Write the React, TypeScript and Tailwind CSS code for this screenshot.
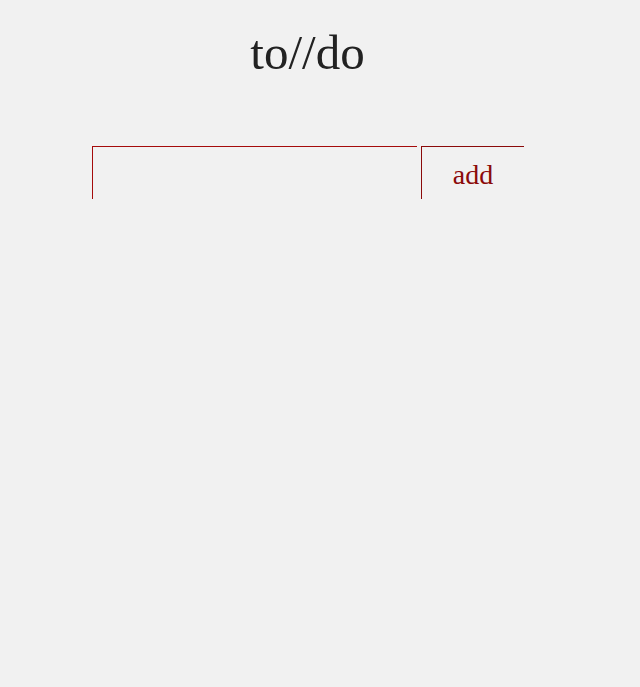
export default function App() {
  return (
    <div className="min-h-[687px] w-full bg-[#f1f1f1] font-['Liberation_Serif',serif]">
      <div className="w-[615px]">
        <h1 className="pt-[23px] text-center text-[49px] leading-[60px] text-[#222]">
          to//do
        </h1>

        <form className="mt-[63px] flex gap-[4px] pl-[92px]">
          <input
            type="text"
            className="h-[53px] w-[325px] border-l border-t border-[#a50b0b] bg-transparent px-3 text-xl outline-none"
          />
          <button
            type="button"
            className="h-[53px] w-[103px] border-l border-t border-[#8b0a0a] bg-transparent pt-[3px] text-[28px] text-[#8b0a0a]"
          >
            add
          </button>
        </form>
      </div>
    </div>
  )
}
